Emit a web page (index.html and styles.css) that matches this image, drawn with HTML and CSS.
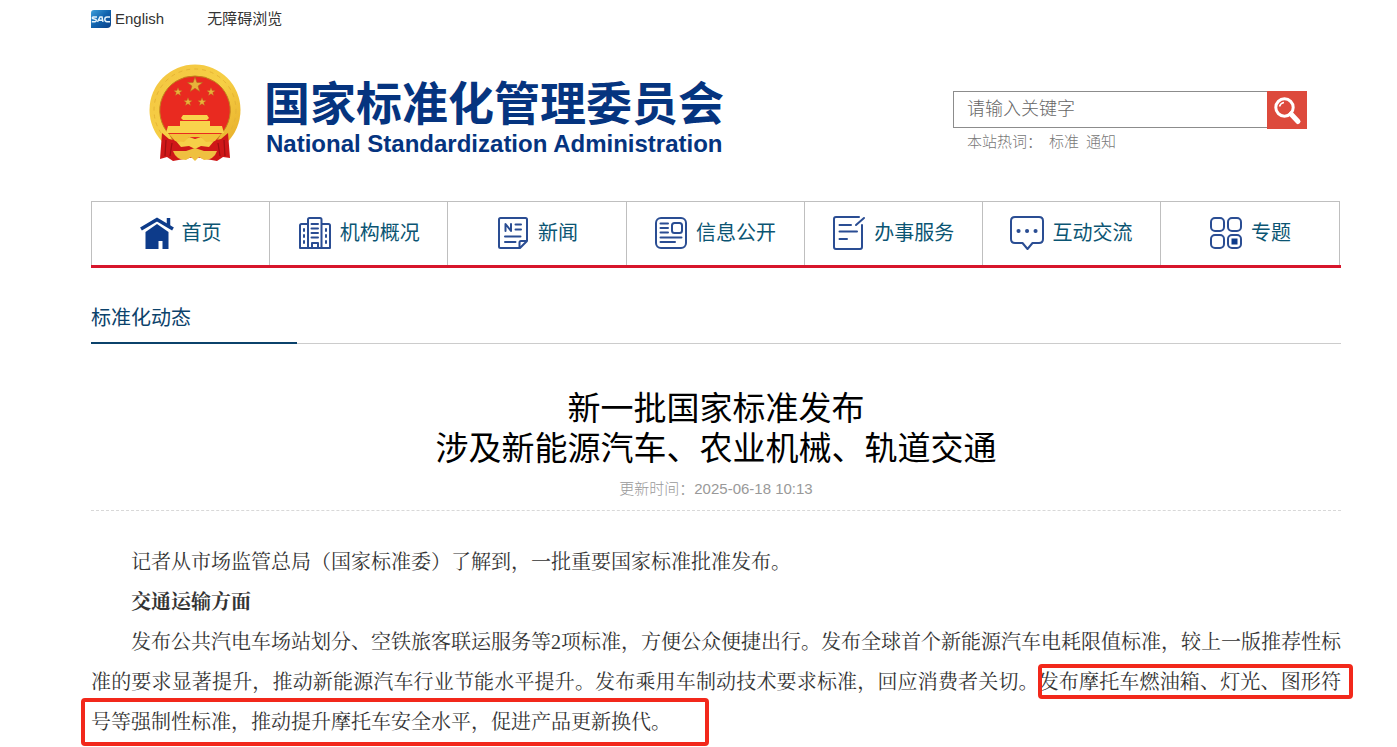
FILE: index.html
```html
<!DOCTYPE html>
<html lang="zh-CN">
<head>
<meta charset="utf-8">
<meta name="viewport" content="width=device-width, initial-scale=1">
<title>国家标准化管理委员会</title>
<link rel="stylesheet" href="styles.css">
</head>
<body>
<div class="page">
  <div class="topbar">
    <a class="topbar-link" href="#">
      <svg class="sac" viewBox="0 0 20 18" aria-hidden="true">
        <defs><linearGradient id="sacg" x1="0" y1="0" x2="1" y2="1"><stop offset="0" stop-color="#3fa0da"/><stop offset=".5" stop-color="#0f62ad"/><stop offset="1" stop-color="#0a3f88"/></linearGradient></defs>
        <path d="M3 0H20V14Q20 18 16 18H0V3Q0 0 3 0Z" fill="url(#sacg)"/>
        <path d="M6 7H2.500Q1 7.200 1.500 8.500L5 9.500Q5.800 11.500 4 11.700H0.800M6.500 11.800L9 7H11L12 11.800M8 10.300H11.500M19 7H16Q13.800 7 13.800 9.300T16 11.700H19" fill="none" stroke="#e6f4fc" stroke-width="1.500"/>
      </svg>English</a>
    <a class="topbar-link" href="#">无障碍浏览</a>
  </div>

  <header class="header">
    <a class="brand" href="#">
      <svg class="emblem" viewBox="0 0 94 100" aria-hidden="true">
        <defs>
          <linearGradient id="gold" x1="0" y1="0" x2="1" y2="1"><stop offset="0" stop-color="#f3c541"/><stop offset=".5" stop-color="#f6cf45"/><stop offset="1" stop-color="#e5aa26"/></linearGradient>
          <path id="star" d="M0-8 1.900-2.600 7.600-2.500 3.100 1 4.700 6.500 0 3.200-4.700 6.500-3.100 1-7.600-2.500-1.900-2.600Z" fill="#e8b23a" stroke="#b5651d" stroke-width=".6"/>
        </defs>
        <circle cx="46" cy="46" r="45.500" fill="url(#gold)"/>
        <circle cx="46" cy="46" r="41" fill="none" stroke="#e6b435" stroke-width="1" stroke-dasharray="4 4"/>
        <path d="M46 12A34.500 34.500 0 0 1 71 71L66 80H26L21 71A34.500 34.500 0 0 1 46 12Z" fill="#e92a20" stroke="#c0841c" stroke-width="1"/>
        <use href="#star" transform="translate(46 21)"/>
        <use href="#star" transform="translate(29 28) scale(.55)"/>
        <use href="#star" transform="translate(62 28) scale(.55)"/>
        <use href="#star" transform="translate(39 38) scale(.55)"/>
        <use href="#star" transform="translate(53 38) scale(.55)"/>
        <path d="M34 51H58L60 54 58 56H34L32 54ZM31 57H61V62H73L75 69H17L19 62H31Z" fill="#f9d34c"/>
        <path d="M13 69 20 75 34 78 42 74H50L58 78 72 75 79 69 81 94 74 93 68 97 46 93 24 97 18 93 11 95Z" fill="#cf1718"/>
        <path d="M17 76 16 92M23 79 21 92M75 76 76 92M69 79 71 92" stroke="#9d0f10" stroke-width="1.200"/>
        <path d="M20 70H72L66 77 56 79 52 73H40L36 79 26 77Z" fill="#f2c13a"/>
        <path d="M27 77 35 78 40 73 46 75 52 73 57 78 65 77 60 83 52 82 46 85 40 82 32 83Z" fill="#f6cf48"/>
        <path d="M24 87H37L40 86 46 84 52 86 55 87H68Q65 96 55 96L50 93 46 97 42 93 37 96Q27 96 24 87Z" fill="#efc040"/>
      </svg>
      <span class="brand-text">
        <span class="brand-cn">国家标准化管理委员会</span>
        <span class="brand-en">National Standardization Administration</span>
      </span>
    </a>
    <form class="search">
      <div class="search-row">
        <input class="search-input" type="text" placeholder="请输入关键字" aria-label="请输入关键字">
        <button class="search-btn" type="button" aria-label="搜索">
          <svg viewBox="0 0 40 38" aria-hidden="true"><path d="M24 23 31 30.500" stroke="#fff" stroke-width="5" stroke-linecap="round"/><circle cx="17.500" cy="16.500" r="8.700" fill="none" stroke="#fff" stroke-width="3"/><path d="M12.500 15.500Q13.500 12 17 11.500" fill="none" stroke="#fff" stroke-width="1.500"/></svg>
        </button>
      </div>
      <div class="hot"><span>本站热词：</span><a href="#">标准</a><a href="#">通知</a></div>
    </form>
  </header>

  <nav class="nav">
    <a class="nav-item" href="#">
      <svg class="icon" viewBox="0 0 34 34" aria-hidden="true"><path d="M5.500 16 17 8 28.500 16V33H22.500V25H18.500V33H5.500Z" fill="#0d3b8a"/><path d="M1 13 17 3.500 33 13" fill="none" stroke="#0d3b8a" stroke-width="3.500"/><path d="M28.500 2V10" stroke="#0d3b8a" stroke-width="3.500"/></svg>首页</a>
    <a class="nav-item" href="#">
      <svg class="icon line" viewBox="0 0 34 34" aria-hidden="true"><path d="M10 32V3.500Q10 2 11.500 2H22Q23.500 2 23.500 3.500V32M10 8H3.500Q2 8 2 9.500V32H32V9.500Q32 8 30.500 8H23.500M14 32V27H20V32M13.500 8H20M13.500 12.500H20M13.500 17H20M13.500 21.500H20"/><path d="M6 13V15M6 19V21M6 25V27M28 13V15M28 19V21M28 25V27"/></svg>机构概况</a>
    <a class="nav-item" href="#">
      <svg class="icon line" viewBox="0 0 34 34" aria-hidden="true"><path d="M31 25V3.500Q31 2 29.500 2H4.500Q3 2 3 3.500V30.500Q3 32 4.500 32H24ZM23.500 32V26.500Q23.500 25 25 25H31M9.500 15V8L15 15V8M19.500 8.500H25M19.500 13.500H25M9 20.500H24.500M9 26H19.500"/></svg>新闻</a>
    <a class="nav-item" href="#">
      <svg class="icon line" viewBox="0 0 34 34" aria-hidden="true"><rect x="2" y="2" width="30" height="30" rx="5"/><rect x="18" y="7" width="10" height="10" rx="2.500"/><path d="M6.500 7.500H14M6.500 12H14M6.500 16.500H14M6.500 21.500H27.500M6.500 26H21"/></svg>信息公开</a>
    <a class="nav-item" href="#">
      <svg class="icon line" viewBox="0 0 34 34" aria-hidden="true"><path d="M27 1H4Q2 1 2 3V31Q2 33 4 33H28Q30 33 30 31V9M24 9 32 2M7.500 9H19M7.500 15.500H25M7.500 23H15"/></svg>办事服务</a>
    <a class="nav-item" href="#">
      <svg class="icon line" viewBox="0 0 34 34" aria-hidden="true"><path d="M5 1H29Q33 1 33 5V23Q33 27 29 27H22.500L17.500 33 12.500 27H5Q1 27 1 23V5Q1 1 5 1Z"/><path d="M8.500 15H8.600M17 15H17.100M25.500 15H25.600" stroke-width="4"/></svg>互动交流</a>
    <a class="nav-item" href="#">
      <svg class="icon line" viewBox="0 0 34 34" aria-hidden="true"><rect x="2" y="2" width="13" height="13" rx="4"/><rect x="19" y="2" width="13" height="13" rx="4"/><rect x="2" y="19" width="13" height="13" rx="4"/><rect x="19" y="19" width="13" height="13" rx="4"/><rect x="22.500" y="22.500" width="6" height="6" fill="#0d3b8a" stroke="none"/></svg>专题</a>
  </nav>

  <main>
    <div class="section"><h2 class="section-title">标准化动态</h2></div>
    <article>
      <h1 class="title">新一批国家标准发布<br>涉及新能源汽车、农业机械、轨道交通</h1>
      <p class="meta">更新时间：2025-06-18 10:13</p>
      <div class="content">
        <p>记者从市场监管总局（国家标准委）了解到，一批重要国家标准批准发布。</p>
        <p><strong>交通运输方面</strong></p>
        <div class="marked">
          <p>发布公共汽电车场站划分、空铁旅客联运服务等2项标准，方便公众便捷出行。发布全球首个新能源汽车电耗限值标准，较上一版推荐性标准的要求显著提升，推动新能源汽车行业节能水平提升。发布乘用车制动技术要求标准，回应消费者关切。发布摩托车燃油箱、灯光、图形符号等强制性标准，推动提升摩托车安全水平，促进产品更新换代。</p>
          <span class="mark mark-a"></span>
          <span class="mark mark-b"></span>
        </div>
      </div>
    </article>
  </main>
</div>
</body>
</html>
```
FILE: styles.css
```css
* { box-sizing: border-box; }
body {
  margin: 0;
  background: #fff;
  color: #333;
  font: 15px/20px "Liberation Sans", "Noto Sans CJK SC", sans-serif;
  text-spacing-trim: space-all;
}
a { color: inherit; text-decoration: none; }
h1, h2, p { margin: 0; font-weight: 400; }
.page { min-height: 100vh; padding: 0 56px 4px 91px; }

.topbar { display: flex; gap: 43px; height: 38px; align-items: center; }
.topbar-link { display: flex; align-items: center; gap: 4px; }
.sac { width: 20px; height: 18px; }

.header { display: flex; justify-content: space-between; height: 163px; padding: 26px 34px 0 58px; }
.brand { display: flex; align-items: flex-start; gap: 21px; color: #05347f; }
.emblem { width: 94px; height: 100px; }
.brand-text { display: flex; flex-direction: column; padding-top: 14px; font-weight: 700; white-space: nowrap; }
.brand-cn { font-size: 46px; line-height: 52px; }
.brand-en { padding-left: 2px; font-size: 24px; line-height: 28px; }

.search { width: 354px; padding-top: 27px; }
.search-row { display: flex; height: 38px; align-items: flex-start; }
.search-input {
  flex: 1;
  min-width: 0;
  height: 37px;
  padding: 0 13px;
  border: 1px solid #8c8c8c;
  border-right: 0;
  border-radius: 0;
  background: #fff;
  font: 300 18px "Liberation Sans", "Noto Sans CJK SC", sans-serif;
}
.search-input::placeholder { color: #666; }
.search-btn { width: 40px; height: 38px; padding: 0; border: 0; background: #dd4a3c; }
.search-btn svg { display: block; width: 40px; height: 38px; }
.hot { display: flex; gap: 7px; padding: 3px 0 0 14px; color: #777; font-weight: 300; }

.nav {
  display: grid;
  grid-template-columns: repeat(6, 1fr) 180px;
  padding-right: 1px;
  border-bottom: 3px solid #d7152b;
}
.nav-item {
  display: flex;
  align-items: center;
  justify-content: center;
  gap: 8px;
  height: 64px;
  padding-bottom: 2px;
  border: 1px solid #bfbfbf;
  border-width: 1px 0 0 1px;
  color: #0b5573;
  font-size: 20px;
}
.nav-item:last-child { border-right-width: 1px; }
.icon { width: 34px; height: 34px; }
.line { fill: none; stroke: #2a4d93; stroke-width: 2; stroke-linecap: round; stroke-linejoin: round; }

.section { margin-top: 29px; height: 47px; border-bottom: 1px solid #ccc; }
.section-title {
  width: 206px;
  height: 47px;
  border-bottom: 2px solid #0b426b;
  color: #0b426b;
  font-size: 20px;
  line-height: 42px;
}

.title { margin-top: 45px; color: #000; font-size: 33px; line-height: 40px; text-align: center; }
.meta {
  margin-top: 10px;
  padding-bottom: 11px;
  border-bottom: 1px dashed #d8d8d8;
  color: #999;
  font-weight: 300;
  text-align: center;
}
.content {
  padding-top: 31px;
  font: 300 20px/40px "Liberation Serif", "Noto Serif CJK SC", "Noto Sans CJK SC", serif;
  text-align: justify;
  text-indent: 2em;
}
.content strong { font-weight: 700; }
.marked { position: relative; }
.mark { position: absolute; border: 4px solid #f2281b; border-radius: 4px; }
.mark-a { top: 42px; right: -12px; width: 315px; height: 35px; }
.mark-b { top: 76px; left: -10px; width: 628px; height: 48px; }
```
